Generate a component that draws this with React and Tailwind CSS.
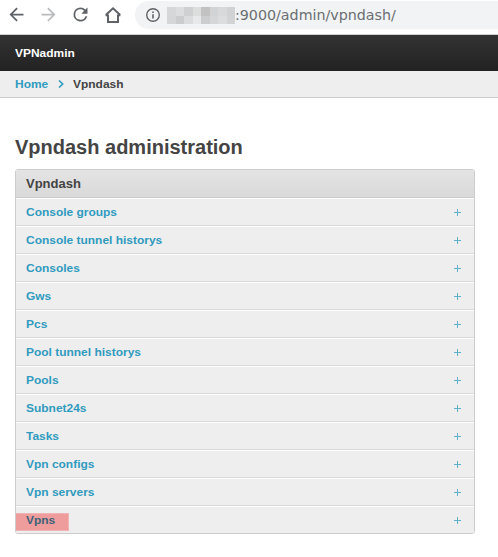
const MODELS = [
  'Console groups', 'Console tunnel historys', 'Consoles', 'Gws', 'Pcs', 'Pool tunnel historys',
  'Pools', 'Subnet24s', 'Tasks', 'Vpn configs', 'Vpn servers', 'Vpns',
];

const Icon = ({ d, className }) => (
  <svg viewBox="0 0 24 24" fill="currentColor" className={className}>
    <path d={d} />
  </svg>
);

// Small bold label, slightly extended horizontally
const Label = ({ children }) => (
  <span className="inline-block origin-left scale-x-[1.087]">{children}</span>
);

function Toolbar() {
  return (
    <div className="flex h-[35px] items-start border-b border-[#cfcfd0] bg-white text-[#5f6368]">
      <div className="flex w-[135px] shrink-0 gap-[11px] pl-[6px] pt-[4px]">
        <Icon className="size-[21px]" d="M20 11H7.83l5.59-5.59L12 4l-8 8 8 8 1.41-1.41L7.83 13H20v-2z" />
        <Icon className="size-[21px] text-[#babcbe]" d="M12 4l-1.41 1.41L16.17 11H4v2h12.17l-5.58 5.59L12 20l8-8z" />
        <Icon className="size-[21px]" d="M17.65 6.35A7.958 7.958 0 0012 4a8 8 0 107.73 10h-2.08A6 6 0 1112 6c1.66 0 3.14.69 4.22 1.78L13 11h7V4l-2.35 2.35z" />
        <svg viewBox="0 0 21 21" className="size-[21px]" fill="none" stroke="currentColor" strokeWidth="2">
          <path d="M6 10.5V18H16V10.5M3.6 11.2H6M16 11.2H18.4M3.8 11L11 4.3L18.2 11" />
        </svg>
      </div>
      <div className="mt-px flex h-7 flex-1 items-center rounded-l-full bg-[#f1f3f4] pl-[11px]">
        <svg viewBox="0 0 16 16" className="size-4 shrink-0" fill="none" stroke="currentColor" strokeWidth="1.4">
          <circle cx="7" cy="8" r="6.3" />
          <path d="M7 7.2v4.3M7 4.5v1.6" strokeWidth="1.6" />
        </svg>
        <div className="ml-[5px] grid h-[17px] w-[68px] shrink-0 grid-cols-8 grid-rows-[9px_8px]">
          <i className="bg-[#d6d7d8]" /><i className="bg-[#dcddde]" /><i className="bg-[#cfd0d1]" /><i className="bg-[#dcdddd]" />
          <i className="bg-[#c2c2c3]" /><i className="bg-[#d2d3d4]" /><i className="bg-[#d8d9da]" /><i className="bg-[#d1d2d3]" />
          <i className="bg-[#d5d6d7]" /><i className="bg-[#cbcccd]" /><i className="bg-[#dbdcdd]" /><i className="bg-[#e8e9eb]" />
          <i className="bg-[#cccdce]" /><i className="bg-[#d5d6d8]" /><i className="bg-[#dcdddf]" /><i className="bg-[#d2d3d4]" />
        </div>
        <span className="whitespace-nowrap font-['DejaVu_Sans',sans-serif] text-[14.25px] leading-7 text-[#6b6e71]">:9000/admin/vpndash/</span>
      </div>
    </div>
  );
}

export default function App() {
  return (
    <div className="h-[557px] w-[498px] overflow-hidden bg-white font-['Liberation_Sans',Arial,sans-serif] text-[11px] font-bold text-[#444]">
      <div className="font-normal"><Toolbar /></div>
      <header className="flex h-9 items-center bg-linear-to-b from-[#333] to-[#222] pl-[15px] text-white"><Label>VPNadmin</Label></header>
      <nav className="flex h-[27px] items-center border-b border-[#ccc] bg-[#eee] pl-[15px]">
        <a className="text-[#309bbf]"><Label>Home</Label></a>
        <svg viewBox="0 0 6 8" className="ml-[12px] mr-[9.5px] h-2 w-[6px]" fill="none" stroke="#309bbf" strokeWidth="1.6">
          <path d="M1 .5L4.7 4L1 7.5" />
        </svg>
        <Label>Vpndash</Label>
      </nav>
      <main className="px-[15px] pt-[37px]">
        <h1 className="h-[34px] text-[20px] leading-6">Vpndash administration</h1>
        <section className="relative w-[460px] overflow-hidden rounded-[3px] border border-[#ccc]">
          <h2 className="flex h-7 items-center border-b border-[#ccc] bg-linear-to-b from-[#e4e4e4] to-[#d9d9d9] pl-[10px] text-[13px]">Vpndash</h2>
          {MODELS.map((name) => (
            <div
              key={name}
              className="flex h-7 items-center justify-between border-t border-b border-t-white border-b-[#d9d9d9] bg-[#eee] pl-[10px] pr-[13px] text-[#309bbf] last:h-[27px] last:border-b-0"
            >
              {name === 'Vpns' ? (
                <span className="relative">
                  <Label>{name}</Label>
                  <span className="absolute -left-[11px] top-[1px] h-[18px] w-[54px] border border-[#f0b2b2] bg-[#ee9c9c]" />
                  <span className="absolute left-0 top-0 text-[#3f6378]"><Label>{name}</Label></span>
                </span>
              ) : <Label>{name}</Label>}
              <svg viewBox="0 0 7 7" className="size-[7px]" stroke="#5fb0cb">
                <path d="M3.5 0v7M0 3.5h7" />
              </svg>
            </div>
          ))}
        </section>
      </main>
    </div>
  );
}
